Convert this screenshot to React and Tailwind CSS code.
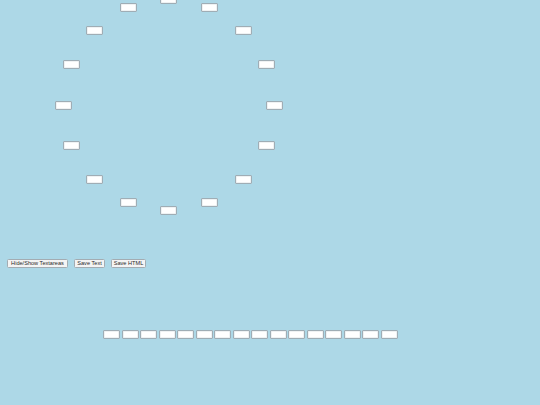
import React from "react";

const RING_COUNT = 16;
const ROW_COUNT = 16;
const CENTER_X = 168.75;
const CENTER_Y = 105.3;
const RADIUS = 105.5;
const BOX_W = 17;
const BOX_H = 9;

function Box({ style }) {
  return (
    <div
      className="box-border w-[17px] h-[9px] bg-white border border-[#9fadb5] rounded-[1px] shadow-[inset_0_0_0_0.5px_#dfe5e8]"
      style={style}
    />
  );
}

function Ring() {
  const boxes = Array.from({ length: RING_COUNT }, (_, i) => {
    const a = (i / RING_COUNT) * Math.PI * 2;
    const left = CENTER_X + RADIUS * Math.sin(a) - BOX_W / 2;
    const top = CENTER_Y - RADIUS * Math.cos(a) - BOX_H / 2;
    return (
      <Box
        key={i}
        style={{ position: "absolute", left: `${left}px`, top: `${top}px` }}
      />
    );
  });
  return <div className="relative h-[258.5px] w-full">{boxes}</div>;
}

function Btn({ children, w }) {
  return (
    <button
      className={`box-border h-[9px] ${w} flex items-center justify-center bg-[#f4f4f4] border border-[#a3acb2] rounded-[1.5px] text-[5.6px] leading-[7px] text-[#2a2a2a] p-0 whitespace-nowrap`}
    >
      {children}
    </button>
  );
}

export default function App() {
  return (
    <div className="w-[540px] h-[405px] overflow-hidden bg-[#add8e7] font-['Liberation_Sans',Arial,sans-serif]">
      <Ring />
      <div className="flex gap-[6px] pl-[7px]">
        <Btn w="w-[61px]">Hide/Show Textareas</Btn>
        <Btn w="w-[31px]">Save Text</Btn>
        <Btn w="w-[35px]">Save HTML</Btn>
      </div>
      <div className="flex gap-[1.5px] pl-[103px] mt-[62.5px]">
        {Array.from({ length: ROW_COUNT }, (_, i) => (
          <Box key={i} />
        ))}
      </div>
    </div>
  );
}
